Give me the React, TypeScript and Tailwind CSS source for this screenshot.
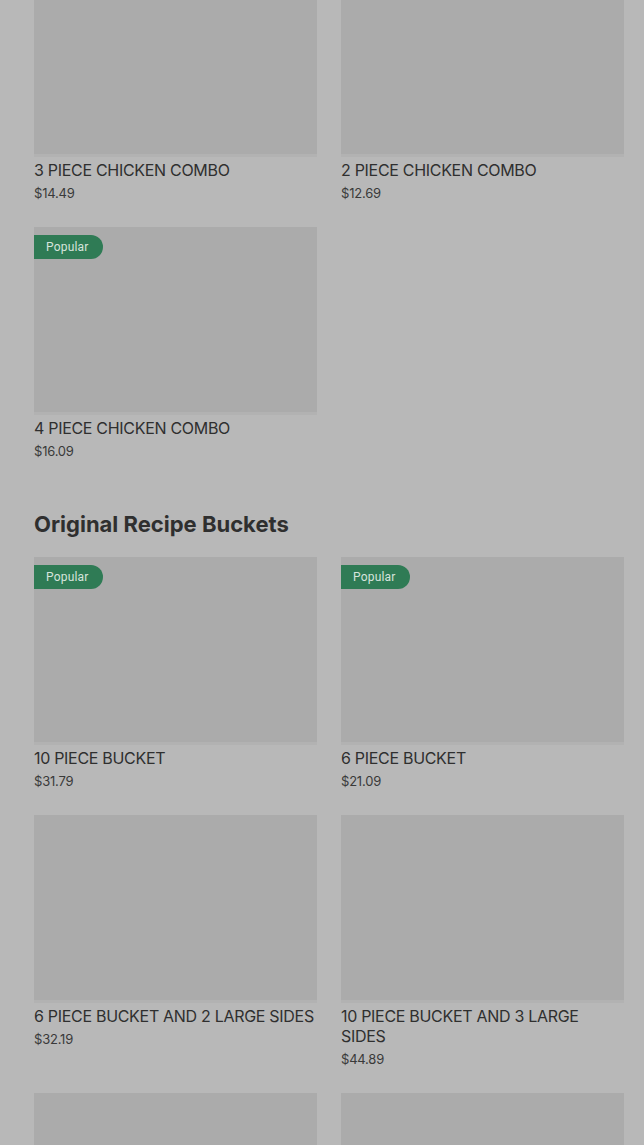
import React from "react";

type Item = { name: string; price: string; popular?: boolean };

const Card = ({ item, imgClass = "h-[188px]", imageOnly = false }: { item: Item; imgClass?: string; imageOnly?: boolean }) => (
  <div className="flex flex-col">
    <div className={`relative ${imgClass} bg-[#ababab] border-b-[3px] border-[#b2b2b2]`}>
      {item.popular && (
        <div className="absolute left-0 top-2 h-6 pl-3 pr-[14px] flex items-center rounded-r-full bg-[#2f7b55] text-[12px] text-[#d6e3dc]" style={{ fontFamily: "Roboto, sans-serif", letterSpacing: "0.2px" }}>
          Popular
        </div>
      )}
    </div>
    {!imageOnly && (
      <>
        <div className="mt-[3px] text-[16px] leading-[20px] text-[#2f2f2f] uppercase" style={{ fontFamily: "Inter, sans-serif", letterSpacing: "-0.3px" }}>
          {item.name}
        </div>
        <div className="mt-[3px] text-[13px] leading-[20px] text-[#3a3a3a]" style={{ fontFamily: "Inter, sans-serif", letterSpacing: "-0.2px" }}>
          {item.price}
        </div>
      </>
    )}
  </div>
);

export default function App() {
  return (
    <div className="w-[644px] h-[1145px] overflow-hidden bg-[#b8b8b8]">
      <div className="pl-[34px] pr-[20px]">
        <div className="grid grid-cols-2 gap-x-6 gap-y-6">
          <Card item={{ name: "3 Piece Chicken Combo", price: "$14.49" }} imgClass="h-[157px]" />
          <Card item={{ name: "2 Piece Chicken Combo", price: "$12.69" }} imgClass="h-[157px]" />
          <Card item={{ name: "4 Piece Chicken Combo", price: "$16.09", popular: true }} />
        </div>
        <h2 className="mt-[48px] mb-[18px] text-[22px] leading-[30px] font-bold text-[#2f2f2f]" style={{ fontFamily: "Inter, sans-serif" }}>
          Original Recipe Buckets
        </h2>
        <div className="grid grid-cols-2 gap-x-6 gap-y-6">
          <Card item={{ name: "10 Piece Bucket", price: "$31.79", popular: true }} />
          <Card item={{ name: "6 Piece Bucket", price: "$21.09", popular: true }} />
          <Card item={{ name: "6 Piece Bucket and 2 Large Sides", price: "$32.19" }} />
          <Card item={{ name: "10 Piece Bucket and 3 Large Sides", price: "$44.89" }} />
          <Card item={{ name: "8 Piece Bucket", price: "$26.99" }} imageOnly />
          <Card item={{ name: "12 Piece Bucket", price: "$38.49" }} imageOnly />
        </div>
      </div>
    </div>
  );
}
